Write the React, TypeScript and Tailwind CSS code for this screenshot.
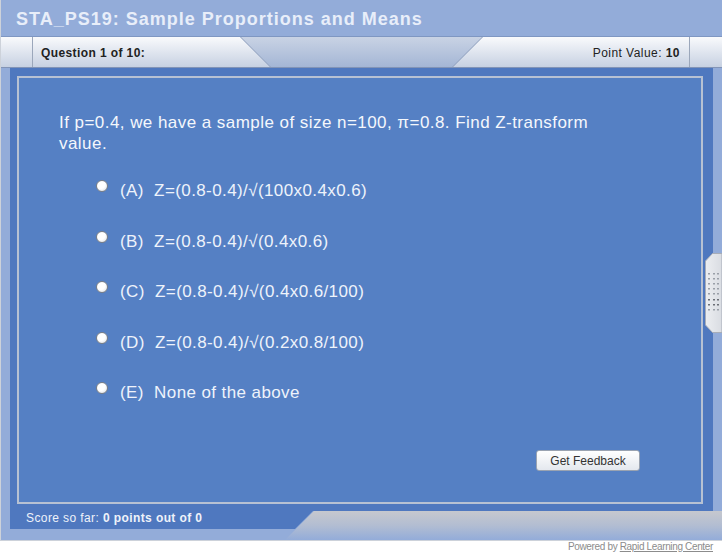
import React from "react";

const options = [
  "(A)\u00a0 Z=(0.8-0.4)/\u221a(100x0.4x0.6)",
  "(B)\u00a0 Z=(0.8-0.4)/\u221a(0.4x0.6)",
  "(C)\u00a0 Z=(0.8-0.4)/\u221a(0.4x0.6/100)",
  "(D)\u00a0 Z=(0.8-0.4)/\u221a(0.2x0.8/100)",
  "(E)\u00a0 None of the above",
];

function Handle() {
  const cols = [3, 8, 12];
  const rows = [20, 25, 30, 35, 40, 46, 51, 56];
  return (
    <svg width="17" height="80" viewBox="0 0 17 80" className="absolute left-[704px] top-[185px]">
      <defs>
        <linearGradient id="hg" x1="0" y1="0" x2="1" y2="0">
          <stop offset="0" stopColor="#eceef1" />
          <stop offset="1" stopColor="#d9dce2" />
        </linearGradient>
      </defs>
      <path d="M7.5,0.5 H17 V79.5 H7.5 L0.5,72 V8 Z" fill="url(#hg)" stroke="#a7adb8" strokeWidth="1" />
      {rows.map((y, ri) =>
        cols.map((x) => (
          <rect key={`${x}-${y}`} x={x} y={y} width="2" height="1.5" fill={ri >= 5 && ri <= 6 ? "#6b6f76" : "#9a9fa8"} />
        ))
      )}
    </svg>
  );
}

export default function App() {
  return (
    <div className="w-[722px] h-[556px] bg-white font-['Liberation_Sans',Arial,sans-serif]">
      <div className="h-[541px] w-[722px] flex flex-col bg-[#93acd9] border-l border-b border-[#cdd2da]">
        {/* Title */}
        <div className="h-[37px] shrink-0 border-b border-[#7f97c2] flex items-center pl-[15px] pt-[3px] text-[18px] tracking-[1px] font-bold text-[#e8eef9]">
          STA_PS19: Sample Proportions and Means
        </div>
        {/* Header */}
        <div className="h-[31px] shrink-0 flex border-b border-[#8294b6] bg-gradient-to-b from-[#f9fafc] to-[#c7d1e2]">
          <div className="w-[32px] border-r border-[#9ba7bb]" />
          <div className="w-[207px] pl-[8px] flex items-center pt-[1px] text-[12px] tracking-[0.4px] font-bold text-[#222]">
            Question 1 of 10:
          </div>
          <div className="w-[243px] h-full">
            <svg width="243" height="30" viewBox="0 0 243 30">
              <defs>
                <linearGradient id="ng" x1="0" y1="0" x2="0" y2="1">
                  <stop offset="0" stopColor="#c9d3e4" />
                  <stop offset="1" stopColor="#a4b6d5" />
                </linearGradient>
              </defs>
              <polygon points="0,0 243,0 213,30 30,30" fill="url(#ng)" />
              <line x1="0.5" y1="0" x2="30.5" y2="30" stroke="#93a3bf" strokeWidth="1" />
              <line x1="242.5" y1="0" x2="212.5" y2="30" stroke="#93a3bf" strokeWidth="1" />
            </svg>
          </div>
          <div className="w-[207px] pr-[9px] flex items-center justify-end pt-[1px] text-[12px] tracking-[0.45px] text-[#222] border-r border-[#9ba7bb]">
            Point Value:&nbsp;<span className="font-bold">10</span>
          </div>
          <div className="flex-1" />
        </div>
        {/* Body */}
        <div className="h-[443px] shrink-0 flex relative">
          <div className="w-[9px]" />
          <div className="w-[703px] bg-[#4f78bf] pt-[8px] pl-[7px] pr-[10px] pb-[7px]">
            <div className="h-full border-2 border-[#b7c1d3] bg-[#5580c4] flex flex-col pl-[40px] pt-[34px]">
              <p className="text-[17px] leading-[21px] tracking-[0.45px] text-[#f4f7fc] max-w-[560px]">
                If p=0.4, we have a sample of size n=100, π=0.8. Find Z-transform value.
              </p>
              <div className="mt-[27px] ml-[37px] flex flex-col gap-[30.5px]">
                {options.map((o) => (
                  <div key={o} className="h-[20px] flex items-start gap-[12px]">
                    <span className="mt-[-1px] w-[12px] h-[12px] shrink-0 rounded-full border border-[#7b7f86] bg-[radial-gradient(circle_at_40%_35%,#ffffff_45%,#d6d9de_100%)]" />
                    <span className="text-[17px] leading-[20px] tracking-[0.4px] text-[#eef3fb] whitespace-pre">{o}</span>
                  </div>
                ))}
              </div>
              <div className="mt-auto flex justify-end pr-[61px] pb-[31px]">
                <button className="w-[104px] h-[21px] rounded-[3px] border border-[#9aa3b1] bg-gradient-to-b from-white to-[#e4e8ee] text-[12px] text-[#333] flex items-center justify-center">
                  Get Feedback
                </button>
              </div>
            </div>
          </div>
          <div className="flex-1" />
          <Handle />
        </div>
        {/* Bottom */}
        <div className="h-[29px] shrink-0 flex">
          <div className="w-[9px] shrink-0" />
          <div className="w-[303px] shrink-0 h-[18px] bg-[#4f78bf] pl-[16px] text-[12px] leading-[14px] tracking-[0.4px] text-[#eef2fa] [clip-path:polygon(0_0,100%_0,calc(100%_-_18px)_100%,0_100%)]">
            Score so far: <span className="font-bold">0 points out of 0</span>
          </div>
          <div className="flex-1 -ml-[28px] h-full bg-gradient-to-b from-[#c6c8ce] via-[#b2bdd2] to-[#93acd9] [clip-path:polygon(29px_0,100%_0,100%_100%,0_100%)]" />
        </div>
      </div>
      <div className="flex justify-end pr-[9px] text-[10px] leading-[12px] tracking-[-0.35px] text-[#8c8c8c]">
        Powered by&nbsp;<span className="underline">Rapid Learning Center</span>
      </div>
    </div>
  );
}
